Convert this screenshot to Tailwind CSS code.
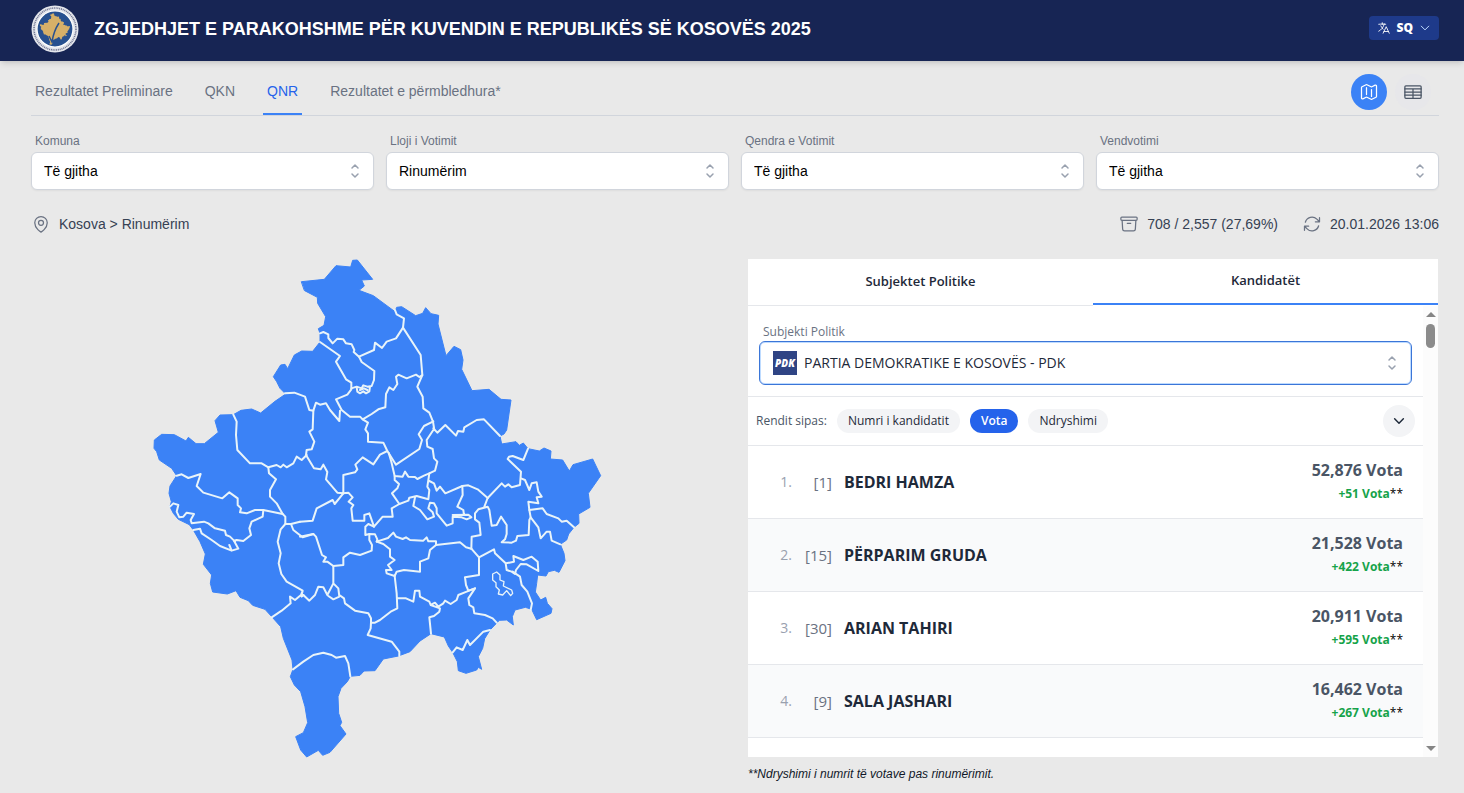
<!DOCTYPE html>
<html lang="sq">
<head>
  <meta charset="UTF-8">
  <meta name="viewport" content="width=device-width, initial-scale=1.0">
  <title>Zgjedhjet e Parakohshme 2025</title>
  <script src="https://cdn.jsdelivr.net/npm/@tailwindcss/browser@4"></script>
</head>
<body class="min-h-screen bg-[#e9e9e9] font-['Liberation_Sans',Arial,sans-serif] text-gray-700">

<!-- shared icons -->
<svg class="hidden">
  <symbol id="updown" viewBox="0 0 20 20" fill="none" stroke="currentColor" stroke-width="1.5" stroke-linecap="round" stroke-linejoin="round">
    <path d="M7 7l3-3 3 3m0 6l-3 3-3-3"/>
  </symbol>
  <symbol id="chevron" viewBox="0 0 24 24" fill="none" stroke="currentColor" stroke-linecap="round" stroke-linejoin="round">
    <path d="m19.5 8.25-7.5 7.5-7.5-7.5"/>
  </symbol>
  <path id="kosova" d="M455 77L523 70L558 29L602 33L608 13L622 12L668 70L635 72L643 90L627 103L670 119L735 167L740 154L755 152L797 179L818 172L827 155L843 173L866 178L864 204L888 299L912 271L932 281L939 312L935 340L966 404L1017 400L1053 430L1083 432L1070 522L1062 534L1050 540L1055 564L1098 557L1108 568L1120 561L1134 578L1168 585L1182 576L1203 585L1201 609L1238 612L1258 645L1269 626L1328 609L1352 659L1315 712L1320 754L1286 774L1287 802L1272 814L1256 834L1250 852L1231 865L1242 892L1245 914L1227 949L1213 943L1195 947L1188 960L1163 957L1160 982L1156 1008L1172 1032L1187 1024L1192 1042L1206 1058L1203 1072L1160 1091L1145 1060L1126 1054L1095 1062L1087 1082L1090 1107L1070 1092L1048 1093L1020 1122L1004 1148L998 1177L985 1202L995 1240L985 1234L980 1242L948 1252L925 1244L922 1217L908 1189L895 1170L883 1143L843 1133L810 1155L780 1187L745 1200L700 1209L675 1244L642 1245L630 1258L601 1261L592 1277L573 1297L564 1322L566 1372L575 1399L570 1409L588 1434L540 1489L518 1498L505 1483L470 1503L452 1482L437 1442L460 1430L473 1400L465 1352L452 1307L433 1287L421 1262L429 1240L426 1212L400 1147L392 1112L367 1084L345 1060L308 1048L295 1034L270 1024L258 1004L232 1014L188 1008L181 982L185 957L160 925L166 894L150 857L130 822L118 806L85 790L70 772L60 752L64 737L57 712L60 690L80 659L65 637L28 612L20 587L12 577L13 552L35 535L73 536L108 555L115 544L138 563L163 563L205 529L195 494L210 477L250 476L273 463L305 459L332 471L375 436L407 414L390 397L380 377L370 362L392 327L405 325L413 338L433 297L455 285L488 286L510 258L510 232L505 218L522 208L527 182L503 142L502 124L464 104Z"/>
</svg>

<header class="relative flex h-[61px] items-center justify-between bg-[#172554] pl-[31px] pr-[25px] shadow-md">
  <div class="flex items-center gap-[15px]">
    <svg class="mb-1 size-12" viewBox="0 0 48 48" aria-label="KQZ">
      <circle cx="24" cy="24" r="23.500" fill="#e4e6ec"/>
      <circle cx="24" cy="24" r="21" fill="none" stroke="#6d7390" stroke-width="1.600" stroke-dasharray="1 .8"/>
      <circle cx="24" cy="24" r="18" fill="#27508f" stroke="#fff" stroke-width="1.200"/>
      <use href="#kosova" fill="#d6b068" transform="translate(8.500 8) scale(.0226 .0212)"/>
      <path d="M18 31l3 6c1-7 3-13 7-19" fill="none" stroke="#27508f" stroke-width="1.500"/>
    </svg>
    <h1 class="mb-1 text-lg font-bold text-white">ZGJEDHJET E PARAKOHSHME PËR KUVENDIN E REPUBLIKËS SË KOSOVËS 2025</h1>
  </div>
  <button class="mb-1.5 flex h-6 items-center gap-1.5 rounded bg-[#1e3a8a] px-2 font-['Open_Sans',sans-serif] text-xs font-extrabold text-white">
    <svg class="size-3.5" viewBox="0 0 24 24" fill="none" stroke="currentColor" stroke-width="1.500" stroke-linecap="round" stroke-linejoin="round">
      <path d="m10.500 21 5.250-11.250L21 21m-9-3h7.500M3 5.621a48.474 48.474 0 0 1 6-.371m0 0c1.120 0 2.233.038 3.334.114M9 5.250V3m3.334 2.364C11.176 10.658 7.690 15.080 3 17.502m9.334-12.138c.896.061 1.785.147 2.666.257m-4.589 8.495a18.023 18.023 0 0 1-3.827-5.802"/>
    </svg>
    SQ
    <svg class="size-3 text-blue-200" stroke-width="2"><use href="#chevron"/></svg>
  </button>
</header>

<main class="pl-[31px] pr-[25px]">
  <div class="flex h-[55px] items-stretch justify-between border-b border-gray-300">
    <nav class="flex gap-6 text-sm text-gray-500">
      <a href="#" class="flex items-center border-b-2 border-transparent px-1 pt-2">Rezultatet Preliminare</a>
      <a href="#" class="flex items-center border-b-2 border-transparent px-1 pt-2">QKN</a>
      <a href="#" class="flex items-center border-b-2 border-[#3b82f6] px-1 pt-2 text-[#2563eb]">QNR</a>
      <a href="#" class="flex items-center border-b-2 border-transparent px-1 pt-2">Rezultatet e përmbledhura*</a>
    </nav>
    <div class="flex items-center gap-2 pt-2 pr-2">
      <button aria-label="Harta" class="flex size-9 items-center justify-center rounded-full bg-[#3b82f6] text-white">
        <svg class="size-5" viewBox="0 0 24 24" fill="none" stroke="currentColor" stroke-width="1.500" stroke-linecap="round" stroke-linejoin="round">
          <path d="M9 6.750V15m6-6v8.250m.503 3.498 4.875-2.437c.381-.190.622-.580.622-1.006V4.820c0-.836-.880-1.380-1.628-1.006l-3.869 1.934c-.317.159-.690.159-1.006 0L9.503 3.252a1.125 1.125 0 0 0-1.006 0L3.622 5.689C3.240 5.880 3 6.270 3 6.695V19.180c0 .836.880 1.380 1.628 1.006l3.869-1.934c.317-.159.690-.159 1.006 0l4.994 2.497c.317.158.690.158 1.006 0Z"/>
        </svg>
      </button>
      <button aria-label="Tabela" class="flex size-9 items-center justify-center rounded-full bg-[#e7e7ea] text-gray-600">
        <svg class="size-5" viewBox="0 0 24 24" fill="none" stroke="currentColor" stroke-width="1.500" stroke-linecap="round" stroke-linejoin="round">
          <rect x="2.250" y="4.500" width="19.500" height="15" rx="1.200"/>
          <path d="M2.250 8.250h19.500M2.250 12h19.500M2.250 15.750h19.500M12 8.250V19.500"/>
        </svg>
      </button>
    </div>
  </div>

  <form class="grid grid-cols-4 gap-3 pt-4">
    <div>
      <label for="komuna" class="block px-1 pb-0.5 text-xs leading-[18px] text-gray-500">Komuna</label>
      <div class="relative">
        <select id="komuna" class="h-[38px] w-full appearance-none rounded-md border border-gray-300 bg-white px-3 text-sm text-black shadow-xs"><option>Të gjitha</option></select>
        <svg class="pointer-events-none absolute top-[9px] right-[9px] size-5 text-gray-400"><use href="#updown"/></svg>
      </div>
    </div>
    <div>
      <label for="lloji" class="block px-1 pb-0.5 text-xs leading-[18px] text-gray-500">Lloji i Votimit</label>
      <div class="relative">
        <select id="lloji" class="h-[38px] w-full appearance-none rounded-md border border-gray-300 bg-white px-3 text-sm text-black shadow-xs"><option>Rinumërim</option></select>
        <svg class="pointer-events-none absolute top-[9px] right-[9px] size-5 text-gray-400"><use href="#updown"/></svg>
      </div>
    </div>
    <div>
      <label for="qendra" class="block px-1 pb-0.5 text-xs leading-[18px] text-gray-500">Qendra e Votimit</label>
      <div class="relative">
        <select id="qendra" class="h-[38px] w-full appearance-none rounded-md border border-gray-300 bg-white px-3 text-sm text-black shadow-xs"><option>Të gjitha</option></select>
        <svg class="pointer-events-none absolute top-[9px] right-[9px] size-5 text-gray-400"><use href="#updown"/></svg>
      </div>
    </div>
    <div>
      <label for="vendi" class="block px-1 pb-0.5 text-xs leading-[18px] text-gray-500">Vendvotimi</label>
      <div class="relative">
        <select id="vendi" class="h-[38px] w-full appearance-none rounded-md border border-gray-300 bg-white px-3 text-sm text-black shadow-xs"><option>Të gjitha</option></select>
        <svg class="pointer-events-none absolute top-[9px] right-[9px] size-5 text-gray-400"><use href="#updown"/></svg>
      </div>
    </div>
  </form>

  <div class="flex items-center justify-between pt-6 text-sm">
    <div class="flex items-center gap-2">
      <svg class="size-5 text-gray-500" viewBox="0 0 24 24" fill="none" stroke="currentColor" stroke-width="1.500" stroke-linecap="round" stroke-linejoin="round">
        <path d="M15 10.500a3 3 0 1 1-6 0 3 3 0 0 1 6 0Z"/>
        <path d="M19.500 10.500c0 7.142-7.500 11.250-7.500 11.250S4.500 17.642 4.500 10.500a7.500 7.500 0 1 1 15 0Z"/>
      </svg>
      Kosova &gt; Rinumërim
    </div>
    <div class="flex items-center gap-6">
      <div class="flex items-center gap-2">
        <svg class="size-5 text-gray-500" viewBox="0 0 24 24" fill="none" stroke="currentColor" stroke-width="1.500" stroke-linecap="round" stroke-linejoin="round">
          <path d="m20.250 7.500-.625 10.632a2.250 2.250 0 0 1-2.247 2.118H6.622a2.250 2.250 0 0 1-2.247-2.118L3.750 7.500M10 11.250h4M3.375 7.500h17.250c.621 0 1.125-.504 1.125-1.125v-1.500c0-.621-.504-1.125-1.125-1.125H3.375c-.621 0-1.125.504-1.125 1.125v1.500c0 .621.504 1.125 1.125 1.125Z"/>
        </svg>
        708 / 2,557 (27,69%)
      </div>
      <div class="flex items-center gap-2">
        <svg class="size-5 text-gray-500" viewBox="0 0 24 24" fill="none" stroke="currentColor" stroke-width="1.500" stroke-linecap="round" stroke-linejoin="round">
          <path d="M16.023 9.348h4.992v-.001M2.985 19.644v-4.992m0 0h4.992m-4.993 0 3.181 3.183a8.250 8.250 0 0 0 13.803-3.700M4.031 9.865a8.250 8.250 0 0 1 13.803-3.700l3.181 3.182m0-4.991v4.990"/>
        </svg>
        20.01.2026 13:06
      </div>
    </div>
  </div>

  <div class="grid grid-cols-[minmax(0,1fr)_minmax(0,1fr)] gap-6 pt-[22px]">
    <!-- municipalities map -->
    <div class="flex justify-center pl-0.5">
      <svg class="h-[504px] w-[456px] max-w-full" viewBox="0 0 1368 1512" fill="none" stroke="#e9f4f9" stroke-width="6" stroke-linejoin="round" stroke-linecap="round">
        <use href="#kosova" fill="#3b82f6" stroke="#3b82f6" stroke-width="3"/>
        <!-- north -->
        <g transform="translate(330 -18)">
          <path d="M180 250L190 246L205 253L205 264L218 280L232 266L250 268L258 280L275 283L283 300L281 306L297 320L342 300L345 278L366 294L380 275L408 265L429 233L432 205L410 193L405 180"/>
          <path d="M429 233L482 315L487 375L472 410L488 440L490 475L508 488L519 515L523 540"/>
          <path d="M487 375L478 381L468 374L440 385L415 374L408 380L412 402L400 420L388 412L378 432L376 472L355 478L335 492L308 508L300 500L270 500L245 480L228 448L262 434L274 418L274 398L258 388L228 335L240 318L180 276"/>
          <path d="M297 320L305 336L343 363L342 390L335 408L322 410L310 406L305 415L290 410L274 415M290 412L292 425L300 430L310 424L318 430L328 424L330 410M300 420L312 415L322 420"/>
          <path d="M75 430L103 428L135 440L148 480L160 482L168 458L180 464L198 460L210 480L238 513L240 482"/>
        </g>
        <!-- west -->
        <g transform="translate(-30 372)">
          <path d="M280 104L290 125L288 165L292 210L330 250L365 250L385 262L410 255L422 262L430 254L440 262L460 250L470 230L485 240L500 225"/>
          <path d="M385 262L387 280L408 298L390 330L390 350L410 370L428 402"/>
          <path d="M110 287L125 283L145 294L182 282L170 318L190 338L247 355L268 337L293 355L293 375L303 385L300 397L320 400L345 390L370 390L428 402L436 410L436 432L453 432L480 425"/>
          <path d="M453 432L460 450L488 472L520 462M436 432L422 448L413 485L422 520L416 550L424 582L440 605L488 632L483 645L465 660L450 650L452 670L425 692L395 712M488 632L484 648L490 645"/>
          <path d="M370 390L368 410L335 425L328 445L333 465L310 483L290 480L282 482L295 506L275 512L240 498L215 480L185 460L180 446L160 450M268 495L275 512"/>
          <path d="M285 485L270 470L258 465L255 452L225 445L205 430L192 425L155 430L152 420L162 402L140 398L130 410L118 412L110 395L115 375L100 370L90 380"/>
        </g>
        <!-- centre -->
        <g transform="translate(450 372)">
          <path d="M40 92L38 148L28 155L43 185L35 208L20 210L18 225L42 265L62 268L70 254L82 276L78 298L112 338L130 340L130 285L165 277L172 268L166 254L188 232L220 253L240 224L262 213"/>
          <path d="M188 118L204 128L196 148L204 160L204 185L250 188L262 213L288 254L358 207L366 180L356 163L372 138L400 124"/>
          <path d="M400 145L412 158L436 135L468 167L474 153L490 155L493 142L530 120L552 118L600 168"/>
          <path d="M400 150L380 180L382 200L398 207L402 235L412 245L405 272L388 280L372 287L352 297L345 291L325 290L315 275L308 290L284 288L274 245L266 218"/>
          <path d="M284 288L284 300L297 312L292 325L276 340L298 372L275 385L278 410L248 410L222 440L208 400L193 405L193 422L158 422L154 385L160 375L146 365L158 352L145 338L130 340"/>
          <path d="M298 372L325 362L328 353L350 348L385 358L388 330L382 320L388 280M388 303L402 310L410 332L420 320L436 340L487 318L505 316L533 328L563 354"/>
          <path d="M345 352L340 378L360 390L382 418L402 410L398 397L385 385L390 368L402 370L410 385L410 400L440 437L458 430L458 410L485 412L500 418L514 412L505 404L458 405M487 318L488 345L472 380L490 390L492 405"/>
          <path d="M222 440L205 432L196 440L196 465L208 462L225 463L232 478L230 485L264 474L280 458L288 470L308 477L318 472L330 480L370 482L380 472L385 484L408 484L408 495L480 487L498 502L514 506"/>
          <path d="M208 462L208 480L216 495L215 512L180 525L150 518L130 532L130 555L100 558L82 545L70 545L78 532L66 525L48 470L40 462L0 470M0 425L38 422L50 385L98 360L104 372L130 340"/>
          <path d="M100 558L100 610L82 645L70 622L55 620L45 645L28 662L10 645L5 650M100 610L115 625L118 650L100 658L85 648M118 645L132 655L135 670L165 692L205 700L213 715L213 728L225 728L240 720L272 695L292 685L290 640L284 588"/>
          <path d="M230 485L250 492L270 508L270 530L284 540L264 555L275 570L258 570L260 580L284 588L290 575L312 570L360 575L360 545L385 535L390 510L408 495"/>
          <path d="M292 655L318 655L340 665L345 632L358 632L360 650L388 665L392 675L420 685L418 695L402 708L388 712L393 761M392 675L405 668L415 680L430 670L435 662L452 672L470 660L475 645L500 635L525 625"/>
        </g>
        <!-- east -->
        <g transform="translate(870 372)">
          <path d="M143 354L185 310L195 320L205 313L215 322L240 315L243 275L203 237L207 230L218 228L250 240L264 206"/>
          <path d="M243 295L255 300L268 330L275 310L290 307L295 335L305 350L290 352L295 370L265 365L268 390L272 412L268 420L266 465L232 468L228 482L215 488L185 487L195 478L200 462L200 435L183 410L170 435L155 437L148 390L143 380L132 383L143 354M132 383L115 388L105 400L105 418L118 428L122 465L95 470L94 506"/>
          <path d="M268 390L308 385L320 402L355 415L365 425L380 422L402 442M272 412L295 442L302 475L320 455L330 455L335 482L361 493"/>
          <path d="M94 506L117 532L162 508L165 520L197 550L200 570L215 575L225 582L228 570L242 552L260 553L295 573L293 545L275 530L250 540L220 528L222 545L198 550M117 532L117 585L75 592L78 615L85 632L105 625L85 655L88 675L100 682L103 700L135 705L158 715L170 728"/>
          <path d="M218 575L240 590L245 615L262 635L276 670L272 690"/>
          <path stroke-width="4" d="M158 582L170 576L180 585L180 600L192 605L190 618L215 630L218 640L212 647L200 632L188 645L175 642L178 630L168 620L168 608L158 600Z"/>
        </g>
        <!-- south -->
        <g transform="translate(330 912)">
          <path d="M99 328L130 305L160 285L190 278L215 285L228 293L255 288L265 310L271 349M333 188L332 205L323 225L395 245L418 275L418 288M578 277L590 262L608 270L622 240L630 255L670 215L690 210"/>
        </g>
      </svg>
    </div>

    <section class="mx-px mt-[3px] font-['Open_Sans',sans-serif]">
      <div class="flex h-[498px] flex-col bg-white">
        <div class="grid h-[47px] shrink-0 grid-cols-2 text-[13px] font-semibold text-gray-800">
          <button class="border-b border-gray-200">Subjektet Politike</button>
          <button class="mb-px border-b-2 border-[#3b82f6]">Kandidatët</button>
        </div>
        <div class="flex min-h-0 flex-1">
          <div class="min-w-0 flex-1 overflow-hidden">
            <div class="border-b border-gray-200 px-[11px] pt-[17px] pb-[11px]">
              <label for="subjekti" class="block px-1 text-xs leading-[18px] text-gray-500">Subjekti Politik</label>
              <div class="relative">
                <select id="subjekti" class="block h-11 w-full appearance-none rounded-md border border-[#3b76d8] bg-white pl-11 text-sm font-medium text-gray-800 inset-ring inset-ring-blue-200"><option>PARTIA DEMOKRATIKE E KOSOVËS - PDK</option></select>
                <span class="pointer-events-none absolute top-2.5 left-3.5 flex size-6 items-center justify-center bg-[#2f4484] text-[10px] font-extrabold text-white italic">PDK</span>
                <svg class="pointer-events-none absolute top-3 right-2.5 size-5 text-gray-400"><use href="#updown"/></svg>
              </div>
            </div>
            <div class="flex h-[49px] items-center justify-between border-b border-gray-200 px-2 text-xs">
              <div class="flex items-center gap-2.5">
                <span class="text-gray-600">Rendit sipas:</span>
                <button class="h-6 rounded-full bg-gray-100 px-[11px] font-medium text-gray-800">Numri i kandidatit</button>
                <button class="h-6 rounded-full bg-[#2563eb] px-[11px] font-semibold text-white">Vota</button>
                <button class="h-6 rounded-full bg-gray-100 px-[11px] font-medium text-gray-800">Ndryshimi</button>
              </div>
              <button aria-label="Hap" class="flex size-8 items-center justify-center rounded-full bg-gray-100 text-gray-800">
                <svg class="size-3.5" stroke-width="2.500"><use href="#chevron"/></svg>
              </button>
            </div>
            <ol id="candidates"></ol>
          </div>
          <!-- scrollbar -->
          <div class="flex w-[15px] flex-col items-center bg-[#fcfcfc] pt-1.5 pb-1.5">
            <span class="border-x-5 border-b-5 border-x-transparent border-b-[#858585]"></span>
            <span class="mt-[7px] h-6 w-[9px] rounded-full bg-[#8b8b8b]"></span>
            <span class="mt-auto border-x-5 border-t-5 border-x-transparent border-t-[#858585]"></span>
          </div>
        </div>
      </div>
      <p class="pt-2 font-['Liberation_Sans',Arial,sans-serif] text-xs leading-[18px] text-gray-900 italic">**Ndryshimi i numrit të votave pas rinumërimit.</p>
    </section>
  </div>
</main>

<script>
  const candidates = [
    { no: 1, name: 'BEDRI HAMZA', votes: '52,876', change: '+51' },
    { no: 15, name: 'PËRPARIM GRUDA', votes: '21,528', change: '+422' },
    { no: 30, name: 'ARIAN TAHIRI', votes: '20,911', change: '+595' },
    { no: 9, name: 'SALA JASHARI', votes: '16,462', change: '+267' },
  ];

  document.getElementById('candidates').innerHTML = candidates.map((c, i) => `
    <li class="flex h-[73px] items-center border-b border-gray-200 bg-white pr-5 even:bg-gray-50">
      <span class="w-11 text-right text-sm text-gray-400">${i + 1}.</span>
      <span class="w-10 text-right text-[15px] text-gray-500">[${c.no}]</span>
      <span class="flex-1 pl-3 font-bold text-gray-800">${c.name}</span>
      <span class="text-right">
        <span class="block leading-6 font-bold text-gray-600">${c.votes} Vota</span>
        <span class="block text-xs leading-6 font-bold text-[#16a34a]">${c.change} Vota<span class="font-medium text-black">**</span></span>
      </span>
    </li>`).join('');
</script>
</body>
</html>
